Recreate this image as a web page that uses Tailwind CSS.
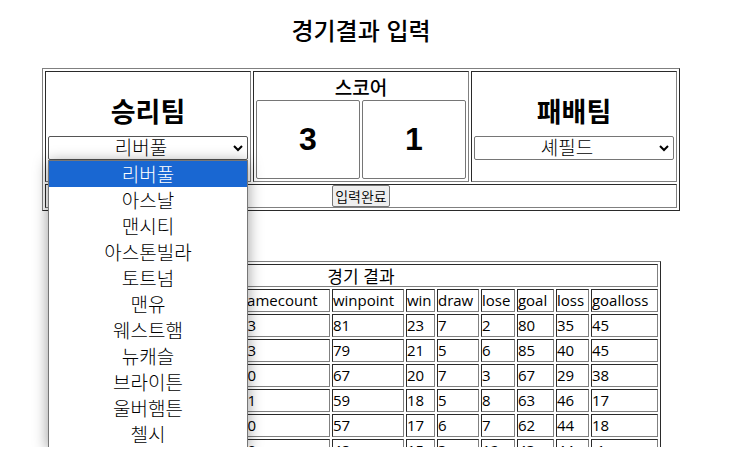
<!DOCTYPE html>
<html lang="ko">
<head>
<meta charset="utf-8">
<title>경기결과 입력</title>
<script src="https://cdn.jsdelivr.net/npm/@tailwindcss/browser@4"></script>
</head>
<body class="bg-white text-black font-['Open_Sans','Noto_Sans_CJK_KR',sans-serif]">
<main class="h-[calc(100vh-6px)] overflow-hidden pr-[19px] flex flex-col items-center">
  <h1 class="mt-3 mb-5 text-[24px] leading-9 font-medium font-['Noto_Sans_CJK_KR',sans-serif]">경기결과 입력</h1>

  <form class="shrink-0">
    <table class="border-separate border-spacing-0.5 border border-t-[#808080] border-l-[#808080] border-r-[#2a2a2a] border-b-[#2a2a2a] [&_td]:border [&_td]:border-t-[#2a2a2a] [&_td]:border-l-[#2a2a2a] [&_td]:border-r-[#808080] [&_td]:border-b-[#808080] text-center font-['Noto_Sans_CJK_KR',sans-serif]">
      <tbody>
        <tr>
          <td class="p-0.5 align-middle">
            <label for="winner" class="block mb-[7px] text-[27px] leading-9 font-bold">승리팀</label>
            <div class="relative">
              <select id="winner" class="appearance-none block w-[200px] h-6 pr-[14px] pb-0.5 rounded-[2px] border border-[#555] bg-white text-center text-[19px] leading-5 font-light font-['Noto_Sans_CJK_KR',sans-serif]">
                <option selected>리버풀</option><option>아스날</option><option>맨시티</option><option>아스톤빌라</option><option>토트넘</option><option>맨유</option><option>웨스트햄</option><option>뉴캐슬</option><option>브라이튼</option><option>울버햄튼</option><option>첼시</option>
              </select>
              <svg class="absolute right-[5px] top-2 pointer-events-none" width="10" height="8" viewBox="0 0 10 8" fill="none" stroke="#000" stroke-width="2" aria-hidden="true"><path d="M1 2l4 4 4-4"/></svg>
              <ul role="listbox" aria-label="승리팀" class="absolute left-0 top-full z-10 w-[200px] border border-[#767676] bg-white text-[19px] leading-[26px] font-light shadow-[0_2px_14px_rgba(0,0,0,0.4)]">
                <li role="option" aria-selected="true" class="bg-[#1967d2] text-white">리버풀</li>
                <li role="option">아스날</li>
                <li role="option">맨시티</li>
                <li role="option">아스톤빌라</li>
                <li role="option">토트넘</li>
                <li role="option">맨유</li>
                <li role="option">웨스트햄</li>
                <li role="option">뉴캐슬</li>
                <li role="option">브라이튼</li>
                <li role="option">울버햄튼</li>
                <li role="option">첼시</li>
              </ul>
            </div>
          </td>
          <td class="p-0.5 align-top">
            <div class="text-[19px] leading-[26px] font-medium">스코어</div>
            <div class="flex gap-0.5">
              <input aria-label="승리팀 스코어" value="3" class="w-[104px] h-[79px] rounded-[2px] border border-[#767676] text-center text-[32px] font-bold font-['Liberation_Sans',sans-serif]">
              <input aria-label="패배팀 스코어" value="1" class="w-[104px] h-[79px] rounded-[2px] border border-[#767676] text-center text-[32px] font-bold font-['Liberation_Sans',sans-serif]">
            </div>
          </td>
          <td class="p-0.5 align-middle">
            <label for="loser" class="block mb-[7px] text-[27px] leading-9 font-bold">패배팀</label>
            <div class="relative">
              <select id="loser" class="appearance-none block w-[200px] h-6 pr-[14px] pb-0.5 rounded-[2px] border border-[#767676] bg-white text-center text-[19px] leading-5 font-light font-['Noto_Sans_CJK_KR',sans-serif]">
                <option selected>셰필드</option><option>리버풀</option><option>아스날</option>
              </select>
              <svg class="absolute right-[5px] top-2 pointer-events-none" width="10" height="8" viewBox="0 0 10 8" fill="none" stroke="#000" stroke-width="2" aria-hidden="true"><path d="M1 2l4 4 4-4"/></svg>
            </div>
          </td>
        </tr>
        <tr>
          <td colspan="3" class="p-0">
            <button type="button" class="block mx-auto h-[22px] w-[58px] rounded-[2px] border border-[#767676] bg-[#efefef] text-[14px] leading-5 font-[350] whitespace-nowrap">입력완료</button>
          </td>
        </tr>
      </tbody>
    </table>
  </form>

  <table class="mt-[50px] w-[600px] table-fixed border-separate border-spacing-0.5 border border-t-[#808080] border-l-[#808080] border-r-[#2a2a2a] border-b-[#2a2a2a] [&_:is(td,th)]:border [&_:is(td,th)]:border-t-[#2a2a2a] [&_:is(td,th)]:border-l-[#2a2a2a] [&_:is(td,th)]:border-r-[#808080] [&_:is(td,th)]:border-b-[#808080] [&_:is(td,th)]:p-0 [&_th]:font-normal text-left text-[15px] leading-[21px]">
    <colgroup>
      <col class="w-[50px]"><col class="w-[120px]"><col class="w-[92px]"><col class="w-[72px]"><col class="w-[29px]"><col class="w-[42px]"><col class="w-[34px]"><col class="w-[37px]"><col class="w-[33px]"><col class="w-[67px]">
    </colgroup>
    <thead>
      <tr><th colspan="10" class="text-center text-[17px] font-['Noto_Sans_CJK_KR',sans-serif]">경기 결과</th></tr>
      <tr><th></th><th></th><th>gamecount</th><th>winpoint</th><th>win</th><th>draw</th><th>lose</th><th>goal</th><th>loss</th><th>goalloss</th></tr>
    </thead>
    <tbody>
      <tr><td></td><td></td><td>33</td><td>81</td><td>23</td><td>7</td><td>2</td><td>80</td><td>35</td><td>45</td></tr>
      <tr><td></td><td></td><td>33</td><td>79</td><td>21</td><td>5</td><td>6</td><td>85</td><td>40</td><td>45</td></tr>
      <tr><td></td><td></td><td>30</td><td>67</td><td>20</td><td>7</td><td>3</td><td>67</td><td>29</td><td>38</td></tr>
      <tr><td></td><td></td><td>31</td><td>59</td><td>18</td><td>5</td><td>8</td><td>63</td><td>46</td><td>17</td></tr>
      <tr><td></td><td></td><td>30</td><td>57</td><td>17</td><td>6</td><td>7</td><td>62</td><td>44</td><td>18</td></tr>
      <tr><td></td><td></td><td>39</td><td>48</td><td>15</td><td>3</td><td>12</td><td>43</td><td>44</td><td>-1</td></tr>
    </tbody>
  </table>
</main>
</body>
</html>
